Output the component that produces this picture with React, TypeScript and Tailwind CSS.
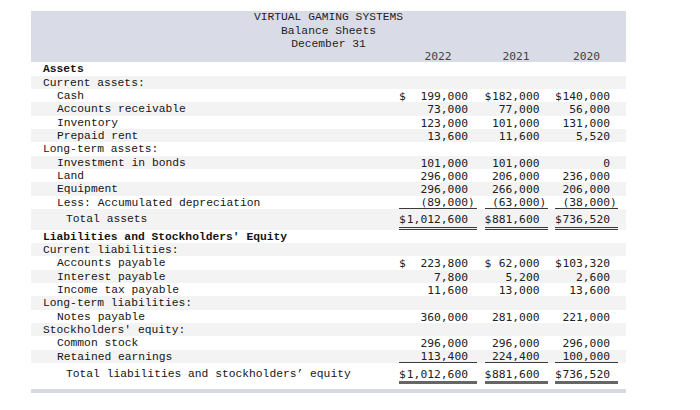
import { clsx } from 'clsx';

type Row = {
  label: string;
  level: 0 | 1 | 2;
  bold?: boolean;
  vals?: [string, string, string];
  dollar?: boolean;
  kind?: 'under' | 'total' | 'grand';
};

const rows: Row[] = [
  { label: 'Assets', level: 0, bold: true },
  { label: 'Current assets:', level: 0 },
  { label: 'Cash', level: 1, vals: ['199,000', '182,000', '140,000'], dollar: true },
  { label: 'Accounts receivable', level: 1, vals: ['73,000', '77,000', '56,000'] },
  { label: 'Inventory', level: 1, vals: ['123,000', '101,000', '131,000'] },
  { label: 'Prepaid rent', level: 1, vals: ['13,600', '11,600', '5,520'] },
  { label: 'Long-term assets:', level: 0 },
  { label: 'Investment in bonds', level: 1, vals: ['101,000', '101,000', '0'] },
  { label: 'Land', level: 1, vals: ['296,000', '206,000', '236,000'] },
  { label: 'Equipment', level: 1, vals: ['296,000', '266,000', '206,000'] },
  { label: 'Less: Accumulated depreciation', level: 1, vals: ['(89,000)', '(63,000)', '(38,000)'], kind: 'under' },
  { label: 'Total assets', level: 2, vals: ['1,012,600', '881,600', '736,520'], dollar: true, kind: 'total' },
  { label: "Liabilities and Stockholders' Equity", level: 0, bold: true },
  { label: 'Current liabilities:', level: 0 },
  { label: 'Accounts payable', level: 1, vals: ['223,800', '62,000', '103,320'], dollar: true },
  { label: 'Interest payable', level: 1, vals: ['7,800', '5,200', '2,600'] },
  { label: 'Income tax payable', level: 1, vals: ['11,600', '13,000', '13,600'] },
  { label: 'Long-term liabilities:', level: 0 },
  { label: 'Notes payable', level: 1, vals: ['360,000', '281,000', '221,000'] },
  { label: "Stockholders' equity:", level: 0 },
  { label: 'Common stock', level: 1, vals: ['296,000', '296,000', '296,000'] },
  { label: 'Retained earnings', level: 1, vals: ['113,400', '224,400', '100,000'], kind: 'under' },
  { label: 'Total liabilities and stockholders’ equity', level: 2, vals: ['1,012,600', '881,600', '736,520'], dollar: true, kind: 'grand' },
];

const grid = 'grid grid-cols-[360.5px_78px_63px_63px] gap-x-[7.5px]';
const mono = "font-['Liberation_Mono','Courier_New',monospace]";
const numFont = "font-['DejaVu_Sans_Mono',monospace]";

function Amount({ value, dollar, kind, first }: { value: string; dollar?: boolean; kind?: Row['kind']; first: boolean }) {
  const neg = value.startsWith('(');
  return (
    <div
      className={clsx(
        'flex flex-col',
        !kind && 'pt-[2px]',
        kind === 'under' && 'pt-[2px]',
        kind === 'total' && 'pt-[5.5px]',
        kind === 'grand' && 'pt-[6px]'
      )}
    >
      <div
        className={clsx(
          'flex justify-between text-[#222]',
          numFont,
          kind === 'under' ? 'leading-[10px]' : 'leading-[11.33px]',
          first ? 'pr-[9px]' : 'pr-[8px]'
        )}
      >
        <span>{dollar ? '$' : ''}</span>
        {neg ? (
          <span>
            {value.slice(0, -1)}
            <span className="-mr-[6.8px]">)</span>
          </span>
        ) : (
          <span>{value}</span>
        )}
      </div>
      {kind === 'under' ? <div className="h-px shrink-0 bg-[#3a3a3a]" /> : null}
      {kind === 'total' ? (
        <div className="mt-[1px] h-[3px] shrink-0 border-y border-[#3a3a3a]" />
      ) : null}
      {kind === 'grand' ? <div className="mt-[1px] h-[3px] shrink-0 bg-[#666]" /> : null}
    </div>
  );
}

export default function App() {
  return (
    <div className="w-[700px] h-[410px] bg-white pt-[11.3px] pl-[31px] text-[11.3px]">
      <div className="w-[595px]">
        <div className="bg-[#d9dce6]">
          <div className={clsx('text-center leading-[13.33px] text-[#1e1e1e]', mono)}>
            <div>VIRTUAL GAMING SYSTEMS</div>
            <div>Balance Sheets</div>
            <div>December 31</div>
          </div>
          <div className={clsx(grid, 'h-[11px] leading-[11px] text-[#444]', numFont)}>
            <div />
            <div className="text-center">2022</div>
            <div className="text-center">2021</div>
            <div className="text-center">2020</div>
          </div>
        </div>
        {rows.map((r, i) => (
          <div key={r.label} className={clsx(grid, i % 2 === 1 ? 'bg-[#f3f3f3]' : 'bg-white')}>
            <div
              className={clsx(
                'leading-[11.33px] text-[#151515] whitespace-nowrap',
                mono,
                r.bold && 'font-bold',
                r.level === 0 && 'pl-[12px]',
                r.level === 1 && 'pl-[26px]',
                r.level === 2 && 'pl-[35px]',
                r.kind === 'total' ? 'pt-[5.5px]' : r.kind === 'grand' ? 'pt-[6px]' : 'pt-[2px]'
              )}
            >
              {r.label}
            </div>
            {r.vals
              ? r.vals.map((v, j) => (
                  <Amount key={j} value={v} dollar={r.dollar} kind={r.kind} first={j === 0} />
                ))
              : null}
          </div>
        ))}
        <div className="mt-[5px] h-[3.5px] bg-[#d7d9e2]" />
      </div>
    </div>
  );
}
